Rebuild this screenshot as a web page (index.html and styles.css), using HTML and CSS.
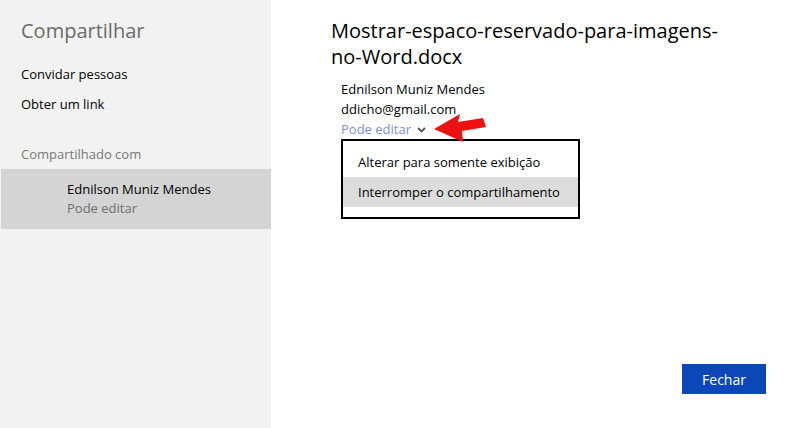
FILE: index.html
```html
<!DOCTYPE html>
<html lang="pt-BR">

<head>
  <meta charset="UTF-8" />
  <title>Compartilhar</title>
  <link rel="stylesheet" href="styles.css">
</head>

<body>
  <div class="page">
    <aside class="sidebar">
      <h2>Compartilhar</h2>
      <a class="nav-link" href="#">Convidar pessoas</a>
      <a class="nav-link" href="#">Obter um link</a>

      <div class="section-label">Compartilhado com</div>
      <div class="shared-item">
        <div class="shared-name">Ednilson Muniz Mendes</div>
        <div class="shared-role">Pode editar</div>
      </div>
    </aside>

    <main class="content">
      <h1 class="doc-title">Mostrar-espaco-reservado-para-imagens-no-Word.docx</h1>

      <div class="person">
        <div class="person-name">Ednilson Muniz Mendes</div>
        <div class="person-email">ddicho@gmail.com</div>
        <div class="permission">
          Pode editar
          <svg class="chevron" width="9" height="6" viewBox="0 0 9 6">
            <path d="M1 1 L4.5 4.5 L8 1" fill="none" stroke="#555" stroke-width="1.8" />
          </svg>
        </div>

        <ul class="menu">
          <li>Alterar para somente exibição</li>
          <li class="active">Interromper o compartilhamento</li>
        </ul>

        <!-- seta vermelha apontando para o menu -->
        <svg class="arrow" width="58" height="34" viewBox="0 0 58 34">
          <polygon points="3,18 29,3 27,11 52,7 55,16 31,20 32,31" fill="#ee1111" />
        </svg>
      </div>

      <button class="close-btn">Fechar</button>
    </main>
  </div>
</body>

</html>
```

FILE: styles.css
```css
body {
  margin: 0;
  font-family: "Open Sans", "Noto Sans", sans-serif;
  background: #ffffff;
  color: #000;
}

.page {
  display: flex;
  height: 428px;
}

.sidebar {
  width: 271px;
  flex-shrink: 0;
  background: #f2f2f2;
  padding-top: 16px;
  box-sizing: border-box;
}

.sidebar h2 {
  margin: 0 0 13px;
  padding-left: 21px;
  font-size: 20px;
  font-weight: normal;
  line-height: 30px;
  color: #6b6b6b;
}

.nav-link {
  display: block;
  padding-left: 21px;
  font-size: 13px;
  line-height: 30px;
  color: #000;
  text-decoration: none;
}

.section-label {
  margin-top: 20px;
  padding-left: 21px;
  font-size: 13px;
  line-height: 30px;
  color: #767676;
}

.shared-item {
  height: 60px;
  margin-left: 1px;
  padding: 11px 0 0 66px;
  box-sizing: border-box;
  background: #d4d4d4;
  font-size: 13px;
  line-height: 19px;
}

.shared-role {
  color: #707070;
}

.content {
  flex: 1;
  display: flex;
  flex-direction: column;
  padding: 18px 32px 34px 60px;
}

.doc-title {
  margin: 0;
  width: 400px;
  font-size: 20px;
  font-weight: normal;
  line-height: 26px;
  color: #000;
}

.person {
  position: relative;
  margin-top: 9px;
  padding-left: 10px;
  font-size: 13px;
  line-height: 20px;
}

.permission {
  color: #7d8fcd;
}

.chevron {
  margin-left: 3px;
  vertical-align: 1px;
}

.arrow {
  position: absolute;
  left: 100px;
  top: 32px;
  z-index: 1;
}

.menu {
  position: absolute;
  top: 100%;
  left: 10px;
  width: 239px;
  margin: 0;
  padding: 6px 0 10px;
  list-style: none;
  border: 2px solid #000;
  box-sizing: border-box;
  background: #fff;
}

.menu li {
  padding-left: 15px;
  line-height: 30px;
}

.menu li.active {
  background: #dcdcdc;
}

.close-btn {
  margin-top: auto;
  align-self: flex-end;
  width: 84px;
  height: 30px;
  border: none;
  background: #0c47b7;
  color: #fff;
  font-family: inherit;
  font-size: 14px;
  cursor: pointer;
}
```
